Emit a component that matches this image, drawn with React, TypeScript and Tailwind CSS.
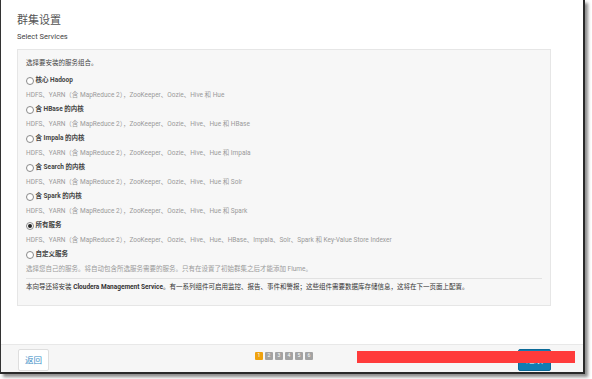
import React from 'react';

const font = { fontFamily: '"Roboto", "Noto Sans CJK SC", sans-serif' };

const options = [
  { label: '核心 Hadoop', desc: 'HDFS、YARN（含 MapReduce 2），ZooKeeper、Oozie、Hive 和 Hue' },
  { label: '含 HBase 的内核', desc: 'HDFS、YARN（含 MapReduce 2），ZooKeeper、Oozie、Hive、Hue 和 HBase' },
  { label: '含 Impala 的内核', desc: 'HDFS、YARN（含 MapReduce 2），ZooKeeper、Oozie、Hive、Hue 和 Impala' },
  { label: '含 Search 的内核', desc: 'HDFS、YARN（含 MapReduce 2），ZooKeeper、Oozie、Hive、Hue 和 Solr' },
  { label: '含 Spark 的内核', desc: 'HDFS、YARN（含 MapReduce 2），ZooKeeper、Oozie、Hive、Hue 和 Spark' },
  {
    label: '所有服务',
    desc: 'HDFS、YARN（含 MapReduce 2），ZooKeeper、Oozie、Hive、Hue、HBase、Impala、Solr、Spark 和 Key-Value Store Indexer',
    checked: true,
  },
  { label: '自定义服务', desc: '选择您自己的服务。将自动包含所选服务需要的服务。只有在设置了初始群集之后才能添加 Flume。' },
];

function Radio({ checked }: { checked?: boolean }) {
  return (
    <span className="w-[8px] h-[8px] rounded-full border border-[#8a8a8a] bg-white flex items-center justify-center mr-[1.5px] shrink-0">
      {checked && <span className="w-[4px] h-[4px] rounded-full bg-[#222]" />}
    </span>
  );
}

export default function App() {
  return (
    <div className="w-[592px] h-[379px] bg-white overflow-hidden" style={font}>
      <div className="w-[585px] h-[374px] border-l border-l-[#333] border-r-2 border-b-2 border-r-[#2a2a2a] border-b-[#2a2a2a] shadow-[3px_3px_3px_rgba(0,0,0,0.45)] flex flex-col">
        <div className="flex-1 pt-[14px] px-[16px]">
          <h1 className="text-[11px] leading-[14px] text-[#555]">群集设置</h1>
          <p className="text-[7.5px] leading-[10px] mt-[4px] text-[#444]">Select Services</p>

          <div className="mt-[7px] w-[534px] bg-[#f7f7f7] border border-[#e6e6e6] px-[8px] pt-[7px] pb-[10px]">
            <div className="h-[14px] flex items-center text-[6.5px] text-[#444] mb-[3px]">选择要安装的服务组合。</div>
            {options.map((o) => (
              <div key={o.label}>
                <div className="h-[14.5px] flex items-center text-[6.5px] font-bold text-[#444]">
                  <Radio checked={o.checked} />
                  {o.label}
                </div>
                <div className="h-[14.5px] flex items-center text-[6.5px] text-[#9a9a9a]">{o.desc}</div>
              </div>
            ))}
            <div className="h-[1px] bg-[#e2e2e2] mt-[1px]" />
            <div className="h-[14px] mt-[2px] flex items-center text-[6.5px] text-[#333]">
              本向导还将安装&nbsp;<span className="font-bold">Cloudera Management Service</span>。有一系列组件可启用监控、报告、事件和警报；这些组件需要数据库存储信息，这将在下一页面上配置。
            </div>
          </div>
        </div>

        <div className="relative h-[28px] border-t border-[#e8e8e8] bg-[#f6f6f6] flex items-start pt-[4px] pl-[17px]">
          <button className="w-[31px] h-[22px] bg-white border border-[#dedede] rounded-[2px] text-[8.5px] text-[#3a8dc6]">
            返回
          </button>
          <div className="ml-[206px] mt-[3px] flex gap-[2px]">
            {[1, 2, 3, 4, 5, 6].map((n) => (
              <span
                key={n}
                className={
                  n === 1
                    ? 'w-[8px] h-[8px] rounded-[1px] bg-[#efa20f] text-white text-[5px] flex items-center justify-center'
                    : 'w-[8px] h-[8px] rounded-[1px] bg-[#a3a3a3] text-white text-[5px] flex items-center justify-center'
                }
              >
                {n}
              </span>
            ))}
          </div>
          <button className="ml-auto mr-[32px] w-[33px] h-[22px] bg-[#0f7db2] border border-[#0b6a98] rounded-[2px] text-[8.5px] text-white">
            继续
          </button>
          <div className="absolute left-[356px] top-[6px] w-[218px] h-[12px] bg-[#ff3b3b]" />
        </div>
      </div>
    </div>
  );
}
